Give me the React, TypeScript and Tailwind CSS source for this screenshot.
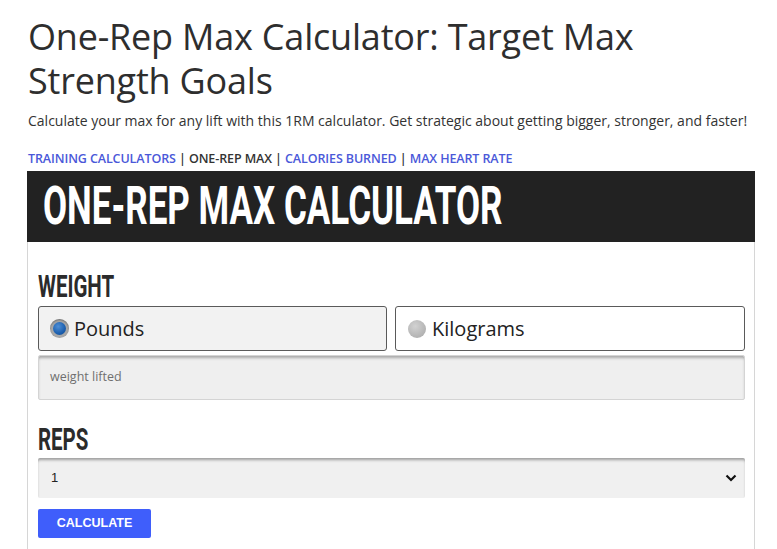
import React from "react";

const cond = { fontFamily: "Roboto, 'DejaVu Sans', sans-serif" };

function Radio({ checked }: { checked: boolean }) {
  return checked ? (
    <span className="inline-block w-[19px] h-[19px] rounded-full bg-[#a9a9a9] p-[3px] shadow-[inset_0_1px_2px_rgba(0,0,0,0.35)]">
      <span className="block w-full h-full rounded-full bg-[radial-gradient(circle_at_40%_35%,#4f8fd6,#1c5fae_60%,#134a8c)]" />
    </span>
  ) : (
    <span className="inline-block w-[18px] h-[18px] rounded-full bg-[radial-gradient(circle_at_40%_35%,#d2d2d2,#b3b3b3_70%,#a3a3a3)]" />
  );
}

export default function App() {
  return (
    <div className="bg-white min-h-[549px] h-[549px] overflow-hidden pl-[27px] pr-[22px] pt-[15px]" style={{ fontFamily: "'Open Sans', 'Liberation Sans', sans-serif" }}>
      <h1 className="pl-[1px] text-[36px] leading-[44px] text-[#2e2e2e] font-normal tracking-[-0.2px]">
        One-Rep Max Calculator: Target Max<br />Strength Goals
      </h1>
      <p className="pl-[1px] mt-[8px] text-[14px] leading-[20px] text-[#333]">
        Calculate your max for any lift with this 1RM calculator. Get strategic about getting bigger, stronger, and faster!
      </p>
      <div className="pl-[1px] mt-[20px] text-[12.5px] leading-[16px] font-semibold uppercase text-[#333] tracking-[-0.1px]">
        <span className="text-[#4a58d9]">Training Calculators</span> | One-Rep Max |{" "}
        <span className="text-[#4a58d9]">Calories Burned</span> |{" "}
        <span className="text-[#4a58d9]">Max Heart Rate</span>
      </div>
      <div className="mt-[4px] w-[728px] border-x border-[#d6d6d6] h-[400px]">
        <div className="-mx-px bg-[#222222] h-[71px] flex items-center pl-[16px] overflow-hidden">
          <span className="inline-block origin-left scale-x-[0.66] whitespace-nowrap text-white font-bold text-[53px] leading-none tracking-[0px]" style={cond}>
            ONE-REP MAX CALCULATOR
          </span>
        </div>
        <div className="pl-[10px] pr-[9px] pt-[29px]">
          <div className="h-[30px] flex items-center">
            <span className="inline-block origin-left scale-x-[0.66] whitespace-nowrap text-[#2b2b2b] font-bold text-[31px] leading-none" style={cond}>
              WEIGHT
            </span>
          </div>
          <div className="mt-[5px] flex gap-[8px]">
            <div className="flex-1 h-[45px] bg-[#f2f2f2] border border-[#5a5a5a] rounded-[3px] flex items-center pl-[11px] gap-[5px]">
              <Radio checked />
              <span className="text-[20px] text-[#222]">Pounds</span>
            </div>
            <div className="flex-1 h-[45px] bg-white border border-[#5a5a5a] rounded-[3px] flex items-center pl-[12px] gap-[6px]">
              <Radio checked={false} />
              <span className="text-[20px] text-[#222]">Kilograms</span>
            </div>
          </div>
          <div className="mt-[4px] h-[45px] bg-[#efefef] border border-[#d4d4d4] rounded-[2px] shadow-[inset_0_3px_3px_-1px_rgba(0,0,0,0.3)] flex items-center pl-[11px]">
            <span className="text-[12.5px] text-[#6f6f6f]">weight lifted</span>
          </div>
          <div className="mt-[26px] h-[26px] flex items-center">
            <span className="inline-block origin-left scale-x-[0.66] whitespace-nowrap text-[#2b2b2b] font-bold text-[31px] leading-none" style={cond}>
              REPS
            </span>
          </div>
          <div className="mt-[6px] h-[40px] bg-[#f0f0f0] rounded-[2px] shadow-[inset_0_3px_3px_-1px_rgba(0,0,0,0.35)] flex items-center justify-between pl-[13px] pr-[8px]">
            <span className="text-[13px] text-[#222]" style={{ fontFamily: "'Liberation Sans', Arial, sans-serif" }}>1</span>
            <svg width="12" height="8" viewBox="0 0 12 8">
              <path d="M1.5 1.5 L6 6 L10.5 1.5" fill="none" stroke="#111" strokeWidth="2.2" />
            </svg>
          </div>
          <button className="mt-[11px] w-[113px] h-[29px] bg-[#3f5efb] rounded-[2px] text-white font-bold text-[12.5px]" style={{ fontFamily: "'Liberation Sans', Arial, sans-serif" }}>
            CALCULATE
          </button>
        </div>
      </div>
    </div>
  );
}
